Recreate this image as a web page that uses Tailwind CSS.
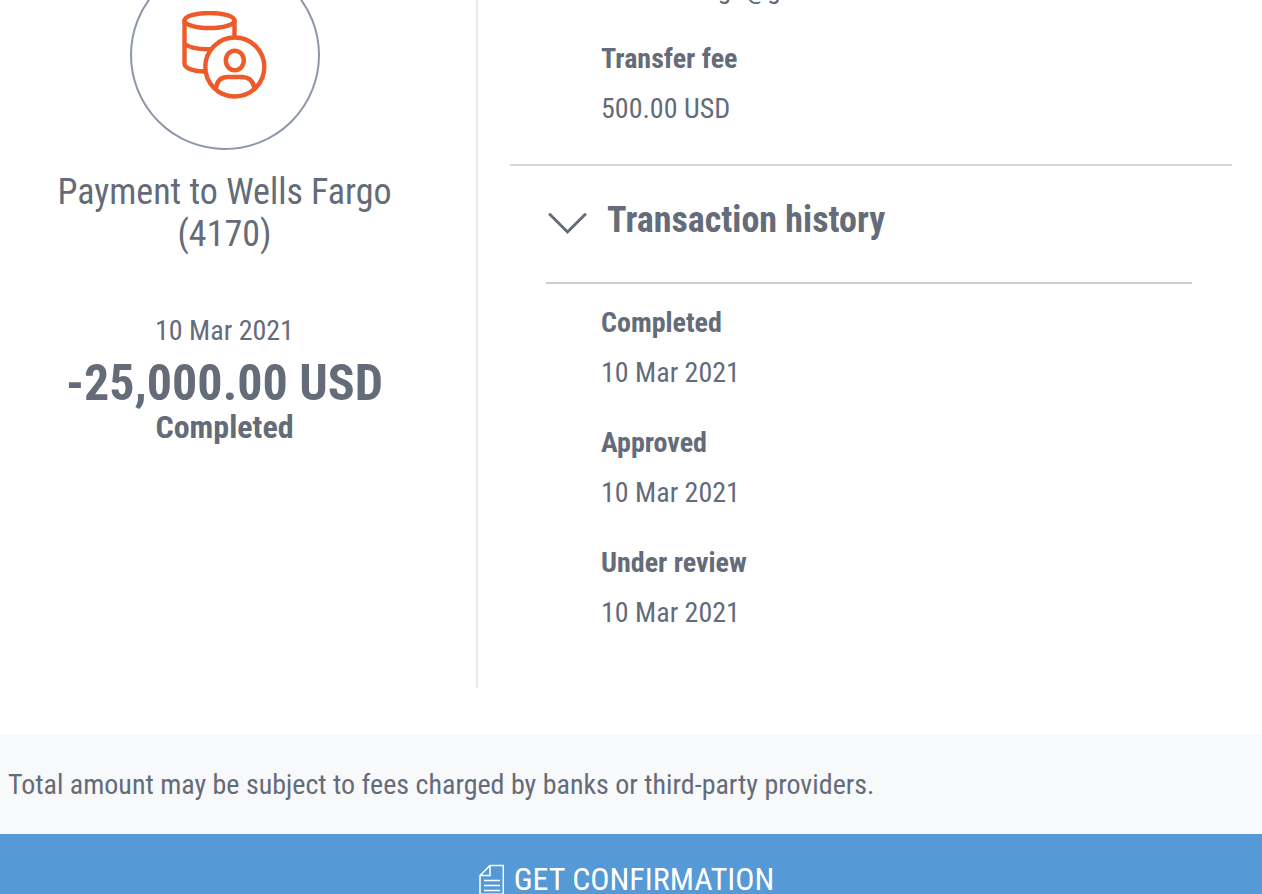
<!DOCTYPE html>
<html lang="en" class="h-full bg-white">

<head>
    <meta charset="UTF-8" />
    <meta name="viewport" content="width=device-width, initial-scale=1.0" />
    <title>Payment details</title>
    <script src="https://cdn.jsdelivr.net/npm/@tailwindcss/browser@4"></script>
</head>

<body class="h-full overflow-hidden font-['Roboto_Condensed','Roboto',sans-serif] text-[28px] leading-10 text-[#646b79]">
<!-- page opens scrolled down to the end of the payment details -->
<div class="-mt-10">
  <main class="flex pb-[46px]">
    <section class="w-[478px] shrink-0 border-r-2 border-[#e8e9eb] pr-[27px] text-center">
      <div class="mx-auto flex size-[190px] items-center justify-center rounded-full border-2 border-[#8d97a9]">
        <svg class="h-[88px] w-[86px]" viewBox="0 0 86 88" fill="none" stroke="#ee5a29" stroke-width="4.400" stroke-linecap="round" aria-hidden="true">
          <ellipse cx="27.500" cy="9.500" rx="25" ry="7.500" />
          <path d="M2.500 9.500V53c0 3.500 7 7 20 7.500M52.500 9.500V26M2.500 32c2 3.500 12 6.500 25 6.200" />
          <circle cx="52.800" cy="56" r="29.500" />
          <ellipse cx="52.800" cy="49.500" rx="9" ry="9.800" />
          <path d="M34 77c1-7 5-11 12-11h14c7 0 11 4 12.500 11" />
        </svg>
      </div>
      <h1 class="mt-[21px] px-12 text-[36px] leading-[42px]">Payment to Wells Fargo (4170)</h1>
      <p class="mt-14">10 Mar 2021</p>
      <p class="mt-1 text-[50px] leading-14 font-bold">-25,000.00 USD</p>
      <p class="text-[32px] leading-8 font-bold">Completed</p>
    </section>

    <section class="flex-1 pt-[9px] pr-[30px] pb-[55px] pl-8">
      <dl class="pl-[91px]">
        <dd class="mb-[30px]">at.wellsfargo@gmail.com</dd>
        <dt class="font-bold">Transfer fee</dt>
        <dd class="mt-[10px]">500.00 USD</dd>
      </dl>

      <div class="mt-[35px] border-t-2 border-[#d3d6dc] pr-10 pl-9">
        <button type="button" aria-expanded="true" aria-controls="history" class="flex w-full items-center gap-5 pt-[33px] pb-[41px] text-left">
          <svg class="ml-[2px] h-8 w-[39px]" viewBox="0 0 39 32" fill="none" stroke="#646b79" stroke-width="3" stroke-linecap="round" aria-hidden="true">
            <path d="M2 10.500L19.500 28 37 10.500" />
          </svg>
          <span class="text-[36px] leading-[42px] font-bold">Transaction history</span>
        </button>
        <dl id="history" class="border-t-2 border-[#cacdd8] pt-[19px] pl-[55px]">
          <dt class="font-bold">Completed</dt>
          <dd class="mt-[10px] mb-[30px]">10 Mar 2021</dd>
          <dt class="font-bold">Approved</dt>
          <dd class="mt-[10px] mb-[30px]">10 Mar 2021</dd>
          <dt class="font-bold">Under review</dt>
          <dd class="mt-[10px]">10 Mar 2021</dd>
        </dl>
      </div>
    </section>
  </main>

  <p class="bg-[#f8f9fb] px-2 pt-[31px] pb-[29px]">Total amount may be subject to fees charged by banks or third-party providers.</p>
  <button type="button" class="flex w-full items-center justify-center gap-[10px] bg-[#5599d6] py-[25px] pr-[9px] text-[32px] leading-10 text-white uppercase">
    <svg class="h-8 w-[25px]" viewBox="0 0 25 32" fill="none" stroke="currentColor" stroke-width="1.500" aria-hidden="true">
      <path d="M11 2.500h13.300V31.200H1V12.500zM11 2.500v10H1M5 17.500h16M5 22.500h16M5 27.500h16" />
    </svg>
    Get confirmation
  </button>
</div>
</body>

</html>
